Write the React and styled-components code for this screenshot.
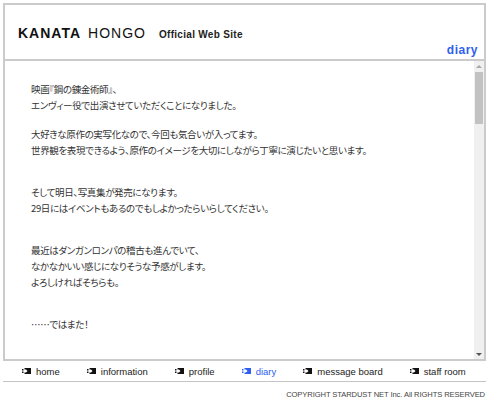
import styled, { createGlobalStyle } from 'styled-components';

const GlobalStyle = createGlobalStyle`
  html, body {
    margin: 0;
    padding: 0;
    background: #fff;
  }
  body {
    font-family: "Liberation Sans", Arial, sans-serif;
  }
`;

const Page = styled.div`
  width: 490px;
  box-sizing: border-box;
  padding: 3px 4px 0 3px;
`;

const Frame = styled.div`
  border: 2px solid #cbcbcb;
`;

const Header = styled.header`
  height: 56px;
  box-sizing: border-box;
  padding: 20px 6px 4px 13px;
  border-bottom: 2px solid #cbcbcb;
  display: flex;
  flex-direction: column;
  justify-content: space-between;
`;

const TitleRow = styled.div`
  display: flex;
  align-items: baseline;
  line-height: 16px;
  color: #111;
`;

const Name = styled.h1`
  margin: 0;
  font-size: 14px;
  font-weight: ${(p) => (p.$bold ? 700 : 400)};
  letter-spacing: 1px;
  margin-right: ${(p) => (p.$bold ? '7px' : '13px')};
`;

const SiteLabel = styled.span`
  font-size: 10px;
  font-weight: 700;
  letter-spacing: 0.3px;
  color: #222;
`;

const Section = styled.div`
  align-self: flex-end;
  font-size: 12px;
  font-weight: 700;
  line-height: 14px;
  letter-spacing: 0.5px;
  color: #2f5ef0;
`;

const Body = styled.div`
  display: flex;
  height: 298px;
`;

const Entry = styled.div`
  flex: 1;
  overflow: hidden;
  padding: 20px 0 0 26px;
  font-family: "Noto Sans CJK JP", "Noto Sans", sans-serif;
  font-size: 9.5px;
  letter-spacing: -0.35px;
  color: #333;
  font-feature-settings: "palt";
`;

const Line = styled.p`
  margin: 0;
  white-space: nowrap;
  line-height: ${(p) => (p.$blank ? '13px' : '16px')};
  height: ${(p) => (p.$blank ? '13px' : '16px')};
`;

const Scrollbar = styled.div`
  width: 10px;
  background: #f0f0f0;
  display: flex;
  flex-direction: column;
  align-items: stretch;
`;

const Arrow = styled.div`
  height: 10px;
  display: flex;
  align-items: center;
  justify-content: center;
  &::after {
    content: '';
    border-left: 3px solid transparent;
    border-right: 3px solid transparent;
    ${(p) =>
      p.$down
        ? 'border-top: 3px solid #555;'
        : 'border-bottom: 3px solid #a8a8a8;'}
  }
`;

const Track = styled.div`
  flex: 1;
  padding: 1px 1px;
`;

const Thumb = styled.div`
  height: 52px;
  background: #c2c2c2;
`;

const Nav = styled.nav`
  display: flex;
  align-items: center;
  height: 20px;
  padding-left: 19px;
  gap: 27px;
  border-bottom: 1px solid #c4c4c4;
`;

const NavItem = styled.a`
  display: flex;
  align-items: center;
  gap: 5px;
  font-size: 9.5px;
  color: ${(p) => (p.$active ? '#2f5ef0' : '#222')};
  text-decoration: none;
  white-space: nowrap;
`;

const Copyright = styled.div`
  text-align: right;
  margin-top: 8px;
  padding-right: 1px;
  font-size: 7.6px;
  line-height: 10px;
  letter-spacing: -0.1px;
  color: #444;
`;

function Bullet({ color }) {
  return (
    <svg width="9" height="6" viewBox="0 0 9 6">
      <rect x="0" y="1" width="1.5" height="1.5" fill={color} />
      <rect x="0" y="3.5" width="1.5" height="1.5" fill={color} />
      <rect x="2.5" y="0" width="1.5" height="1.5" fill={color} />
      <rect x="2.5" y="4.5" width="1.5" height="1.5" fill={color} />
      <path d="M4 0 H9 V6 H4 V4.5 L5.5 3 L4 1.5 Z" fill={color} />
    </svg>
  );
}

const lines = [
  '映画『鋼の錬金術師』、',
  'エンヴィー役で出演させていただくことになりました。',
  '',
  '大好きな原作の実写化なので、今回も気合いが入ってます。',
  '世界観を表現できるよう、原作のイメージを大切にしながら丁寧に演じたいと思います。',
  '',
  '',
  'そして明日、写真集が発売になります。',
  '29日にはイベントもあるのでもしよかったらいらしてください。',
  '',
  '',
  '最近はダンガンロンパの稽古も進んでいて、',
  'なかなかいい感じになりそうな予感がします。',
  'よろしければそちらも。',
  '',
  '',
  '……ではまた！',
  '',
  '',
  '本郷奏多',
];

const navItems = [
  'home',
  'information',
  'profile',
  'diary',
  'message board',
  'staff room',
];

export default function App() {
  return (
    <>
      <GlobalStyle />
      <Page>
        <Frame>
          <Header>
            <TitleRow>
              <Name $bold>KANATA</Name>
              <Name>HONGO</Name>
              <SiteLabel>Official Web Site</SiteLabel>
            </TitleRow>
            <Section>diary</Section>
          </Header>
          <Body>
            <Entry>
              {lines.map((t, i) => (
                <Line key={i} $blank={!t}>
                  {t}
                </Line>
              ))}
            </Entry>
            <Scrollbar>
              <Arrow />
              <Track>
                <Thumb />
              </Track>
              <Arrow $down />
            </Scrollbar>
          </Body>
        </Frame>
        <Nav>
          {navItems.map((n) => (
            <NavItem key={n} href="#" $active={n === 'diary'}>
              <Bullet color={n === 'diary' ? '#2f5ef0' : '#111'} />
              {n}
            </NavItem>
          ))}
        </Nav>
        <Copyright>COPYRIGHT STARDUST NET Inc. All RIGHTS RESERVED</Copyright>
      </Page>
    </>
  );
}
